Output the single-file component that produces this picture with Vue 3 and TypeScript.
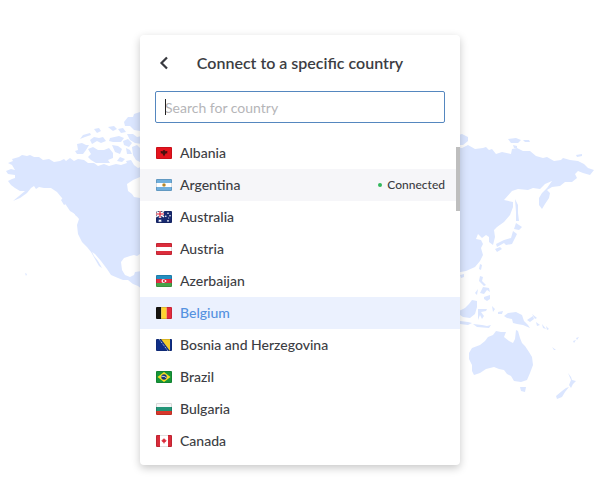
<script setup lang="ts">
import { computed, ref } from 'vue'

interface Country {
  code: string
  name: string
  connected?: boolean
}

const countries: Country[] = [
  { code: 'al', name: 'Albania' },
  { code: 'ar', name: 'Argentina', connected: true },
  { code: 'au', name: 'Australia' },
  { code: 'at', name: 'Austria' },
  { code: 'az', name: 'Azerbaijan' },
  { code: 'be', name: 'Belgium' },
  { code: 'ba', name: 'Bosnia and Herzegovina' },
  { code: 'br', name: 'Brazil' },
  { code: 'bg', name: 'Bulgaria' },
  { code: 'ca', name: 'Canada' },
]

const query = ref('')
const selected = ref('be')

const visible = computed(() =>
  countries.filter((c) => c.name.toLowerCase().includes(query.value.trim().toLowerCase())),
)
</script>

<template>
  <main class="page">
    <svg class="map" viewBox="0 0 600 500" preserveAspectRatio="xMidYMin slice" aria-hidden="true">
      <!-- Alaska, Canada and the United States -->
      <path d="M8 163L13 161L12 159L19 157L22 155L27 156L30 155L34 157L39 157L43 160L49 159L54 162L60 161L64 159L66 161L70 158L74 161L78 159L84 160L88 163L94 163L98 166L104 164L109 166L116 164L121 165L127 163L126 161L131 160L134 165L138 168L146 165V178L140 177L133 180L127 184L128 191L132 194L134 197L140 198L146 202V255L140 254L137 256L134 255L130 256L124 258L121 262L122 270L125 275L130 277L134 275L135 272L142 271V289L138 286L133 284L128 280L123 280L118 278L111 275L107 269L101 261L95 254L92 252L94 256L98 261L102 268L99 266L95 259L91 252L87 247L82 242L78 234L77 225L79 219L75 214L70 211L66 205L62 198L57 192L51 188L44 188L39 187L36 189L34 186L31 188L27 193L20 198L13 201L19 196L25 191L20 191L15 188L11 185L8 181L12 179L15 178L15 175L8 174L6 171L11 169L15 170L12 165Z" />
      <path d="M63 198L66 204L64 205L61 200ZM72 210L78 214L80 217L76 216ZM25 273L27 274L26 276Z" />
      <!-- Arctic islands -->
      <path d="M77 144L82 143L86 145L89 145L86 150L83 154L77 154L75 151L78 150ZM88 149L93 147L98 150L104 150L109 148L113 153L113 158L108 160L110 163L103 163L96 163L91 160L88 157L91 154ZM80 139L83 135L90 133L91 135L85 137ZM90 140L94 137L99 138L103 137L106 141L101 143L97 141L92 144ZM108 127L114 126L117 129L113 131ZM94 129L99 128L101 131L97 133ZM110 138L119 136L124 138L121 142L113 142L109 141ZM112 145L118 146L122 149L120 154L115 152ZM123 141L128 139L132 143L129 147L124 145ZM118 129L123 128L126 132L121 133ZM120 157L125 159L122 162L117 161ZM124 122L128 117L133 117L134 114L140 112V131L134 130L130 126L125 126ZM127 134L133 134L137 137L142 136V144L135 143L130 140ZM132 147L137 145L141 149L142 163L136 160L133 155ZM126 148L130 150L132 154L127 154Z" />
      <!-- Eurasia -->
      <path d="M455 147L462 148L468 145L475 149L483 148L486 147L489 150L492 149L496 154L502 152L511 154L512 149L517 148L523 151L530 151L536 156L543 158L547 157L554 161L561 160L563 158L570 160L578 161L584 164L588 168L594 170L590 175L583 173L578 171L575 174L577 178L572 182L565 182L560 186L552 187L547 190L550 193L549 198L545 204L542 209L539 205L539 198L542 193L547 188L552 181L545 184L540 189L533 188L528 190L518 189L512 191L504 200L513 202L513 207L510 215L504 222L497 227L494 230L495 237L493 245L489 242L489 237L486 235L482 238L478 234L476 239L481 240L483 244L481 248L483 255L480 261L475 267L466 271L455 273Z" />
      <path d="M455 136L462 134L468 137L468 141L463 145L455 145ZM508 139L516 138L521 140L518 143L511 143ZM523 140L529 140L530 142L525 142ZM513 145L517 146L517 148L514 148ZM576 155L582 154L582 156L577 157Z" />
      <!-- Japan and the Philippines -->
      <path d="M515 199L518 205L518 213L519 221L516 221L516 212ZM516 223L522 227L519 230L514 229ZM513 231L517 234L514 240L512 244L506 245L504 243L497 247L496 244L504 240L511 238ZM495 249L500 247L502 249L497 252ZM480 264L482 265L481 270L479 269ZM480 276L483 277L482 281L486 285L484 286L479 281ZM483 287L489 288L490 292L487 290L484 294L480 293ZM484 297L490 295L490 299L487 301L484 299ZM475 293L478 289L477 295ZM460 275L464 274L464 277L461 278Z" />
      <!-- Indonesia and New Guinea -->
      <path d="M459 311L465 308L469 304L472 300L477 301L477 307L475 314L470 318L463 317L460 315ZM460 321L468 322L472 323L468 325L460 324ZM473 324L482 325L487 326L491 325L489 328L477 327ZM478 309L487 309L486 311L481 312L484 316L482 319L480 315L478 320L478 314ZM492 306L495 309L493 312ZM498 312L503 311L502 314L498 314ZM504 316L508 313L516 312L522 315L524 321L528 325L530 328L523 325L517 324L513 323L512 319L507 318ZM527 320L533 316L534 319L530 322ZM532 314L537 318L535 319ZM536 322L540 325L537 326ZM542 324L546 329L543 328ZM546 326L549 329L547 330Z" />
      <!-- Australia and New Zealand -->
      <path d="M469 353L472 348L480 345L485 341L488 337L493 335L496 331L501 332L506 332L504 337L509 341L513 343L515 339L516 330L518 331L520 338L522 343L525 346L529 352L532 357L533 365L530 373L527 380L521 382L514 381L511 376L507 374L504 370L499 369L494 367L486 369L480 373L474 375L472 371L472 365L469 359ZM520 387L526 387L525 392L521 391ZM568 373L571 377L572 380L576 381L573 384L571 388L569 385L571 380ZM569 387L565 392L562 397L557 399L556 396L562 391L566 388ZM552 347L556 350L554 350ZM573 341L576 340L574 343ZM576 338L579 337L577 340Z" />
    </svg>

    <section class="card" aria-labelledby="panel-title">
      <header class="header">
        <button class="back" type="button" aria-label="Back">
          <svg viewBox="0 0 12 14" width="12" height="14" aria-hidden="true">
            <path d="M9 1.500L3.500 7l5.500 5.500" />
          </svg>
        </button>
        <h1 id="panel-title">Connect to a specific country</h1>
      </header>

      <div class="search">
        <input v-model="query" type="text" aria-label="Search for country" placeholder="Search for country" />
        <span v-if="!query" class="caret"></span>
      </div>

      <div class="results">
        <ul class="list">
          <li v-for="country in visible" :key="country.code">
            <button
              type="button"
              class="row"
              :class="{ connected: country.connected, selected: country.code === selected }"
              @click="selected = country.code"
            >
              <svg class="flag" viewBox="0 0 16 12" aria-hidden="true">
                <g v-if="country.code === 'al'">
                  <path fill="#e5131d" d="M0 0h16v12H0z" />
                  <path fill="#4a100f" d="M7.300 3l.7.600.7-.6.600.5-.4.800 2.600-.3-.4 1.300.4.900-1.900.2L8.800 8 8 9.500 7.200 8l-.8-1.600-1.900-.2.400-.9-.4-1.300 2.600.3-.4-.8z" />
                </g>
                <g v-else-if="country.code === 'ar'">
                  <path fill="#70afdd" d="M0 0h16v12H0z" />
                  <path fill="#fff" d="M0 4h16v4H0z" />
                  <circle cx="8" cy="6" r="1.800" fill="#c99836" />
                  <circle cx="8" cy="6" r=".7" fill="#8b6527" />
                </g>
                <g v-else-if="country.code === 'au'">
                  <path fill="#182a70" d="M0 0h16v12H0z" />
                  <path stroke="#fff" stroke-width="1.500" d="M0 0l8 6M8 0L0 6" />
                  <path stroke="#fff" stroke-width="2.400" d="M4 0v7M0 3h8" />
                  <path stroke="#d91f35" stroke-width="1.200" d="M4 0v6.500M0 3h8" />
                  <g fill="#fff">
                    <path d="M4 8l.5 1 1.200-.2-.6 1 .6.900-1.200-.1L4 11.500l-.5-.9-1.200.1.600-.9-.6-1 1.200.2z" />
                    <circle cx="12" cy="2.200" r=".8" />
                    <circle cx="9.800" cy="5.300" r=".8" />
                    <circle cx="14" cy="4.700" r=".8" />
                    <circle cx="12.700" cy="7" r=".5" />
                    <circle cx="12" cy="9.800" r=".9" />
                  </g>
                </g>
                <g v-else-if="country.code === 'at'">
                  <path fill="#dc2d3c" d="M0 0h16v12H0z" />
                  <path fill="#fff" d="M0 4h16v4H0z" />
                </g>
                <g v-else-if="country.code === 'az'">
                  <path fill="#238fc1" d="M0 0h16v4H0z" />
                  <path fill="#df2d43" d="M0 4h16v4H0z" />
                  <path fill="#45a348" d="M0 8h16v4H0z" />
                  <circle cx="7.500" cy="6" r="2" fill="#fff" />
                  <circle cx="8.200" cy="6" r="1.400" fill="#df2d43" />
                  <circle cx="9.500" cy="6" r=".9" fill="#fff" />
                </g>
                <g v-else-if="country.code === 'be'">
                  <path fill="#15130f" d="M0 0h5.300v12H0z" />
                  <path fill="#ffd431" d="M5.300 0h5.400v12H5.300z" />
                  <path fill="#e42b3d" d="M10.700 0H16v12h-5.300z" />
                </g>
                <g v-else-if="country.code === 'ba'">
                  <path fill="#102f87" d="M0 0h16v12H0z" />
                  <path fill="#f6cf2c" d="M5 0h9v12z" />
                  <path stroke="#d6e0f5" stroke-dasharray="1 1" d="M3 0l9 12" />
                </g>
                <g v-else-if="country.code === 'br'">
                  <path fill="#169639" d="M0 0h16v12H0z" />
                  <path fill="#f8dc24" d="M8 1l6.500 5L8 11 1.500 6z" />
                  <circle cx="8" cy="6" r="2.700" fill="#173477" />
                  <path fill="none" stroke="#fff" stroke-width=".8" d="M5.500 5.300q3-.5 5 1.600" />
                </g>
                <g v-else-if="country.code === 'bg'">
                  <path fill="#f7f7f7" d="M0 0h16v4H0z" />
                  <path fill="#229477" d="M0 4h16v4H0z" />
                  <path fill="#d8382c" d="M0 8h16v4H0z" />
                </g>
                <g v-else>
                  <path fill="#d92b3a" d="M0 0h16v12H0z" />
                  <path fill="#fff" d="M4 0h8v12H4z" />
                  <path fill="#d92b3a" d="M8 3l.7 1.300.7-.2-.1 1.200 1.200-.2-.3 1.100-1.700 1.500H8.200V9h-.4V7.700h-.3L5.800 6.200l-.3-1.100 1.200.2-.1-1.200.7.200z" />
                </g>
                <path class="edge" d="M.5.5h15v11H.5z" />
              </svg>
              <span class="name">{{ country.name }}</span>
              <span v-if="country.connected" class="status">Connected</span>
            </button>
          </li>
        </ul>
        <span class="thumb"></span>
      </div>
    </section>
  </main>
</template>

<style>
body {
  margin: 0;
  background: #fff;
}
</style>

<style scoped>
.page {
  position: relative;
  display: flex;
  justify-content: center;
  align-items: flex-start;
  box-sizing: border-box;
  min-height: 100vh;
  padding: 35px 16px;
  overflow: hidden;
  background: #fff;
  color: #3c3d43;
  font-family: Lato, "Liberation Sans", sans-serif;
}

.map {
  position: absolute;
  inset: 0;
  width: 100%;
  height: 100%;
  fill: #dbe6ff;
}

.card {
  position: relative;
  box-sizing: border-box;
  width: 100%;
  max-width: 320px;
  padding-bottom: 8px;
  border-radius: 4px;
  background: #fff;
  box-shadow: 0 3px 8px rgba(0, 0, 0, 0.22);
}

.header {
  display: grid;
  grid-template-columns: 16px 1fr 16px;
  align-items: center;
  height: 56px;
  padding: 0 16px;
}

.back {
  display: flex;
  justify-content: center;
  padding: 0;
  border: 0;
  background: none;
  cursor: pointer;
}

.back path {
  fill: none;
  stroke: #38393f;
  stroke-width: 2.2;
}

h1 {
  margin: 0;
  font-size: 16px;
  font-weight: 600;
  line-height: 24px;
  text-align: center;
}

.search {
  position: relative;
  margin: 0 15px;
}

input {
  display: block;
  box-sizing: border-box;
  width: 100%;
  height: 32px;
  padding: 0 9px;
  border: 1px solid #5587bf;
  border-radius: 2px;
  outline: none;
  background: #fff;
  color: #3c3d43;
  font: 400 14px/20px Lato, "Liberation Sans", sans-serif;
}

input::placeholder {
  color: #b5b5b8;
  opacity: 1;
}

.caret {
  position: absolute;
  top: 8px;
  left: 10px;
  width: 1px;
  height: 16px;
  background: #222;
}

.results {
  position: relative;
  padding-top: 14px;
}

.list {
  margin: 0;
  padding: 0;
  list-style: none;
}

.row {
  display: flex;
  align-items: center;
  gap: 8px;
  width: 100%;
  height: 32px;
  padding: 0 15px 0 16px;
  border: 0;
  background: transparent;
  color: inherit;
  font: 500 14px/20px Lato, "Liberation Sans", sans-serif;
  text-align: left;
  cursor: pointer;
}

.row.connected {
  background: #f6f6f9;
}

.row.selected {
  background: #ebf1fe;
  color: #5592e0;
}

.flag {
  flex: none;
  width: 16px;
  height: 12px;
  border-radius: 1px;
}

.edge {
  fill: none;
  stroke: #000;
  stroke-opacity: 0.12;
}

.name {
  flex: 1;
}

.status {
  display: flex;
  align-items: center;
  gap: 5px;
  font-size: 12px;
}

.status::before {
  content: "";
  width: 4px;
  height: 4px;
  border-radius: 50%;
  background: #32b85d;
}

.thumb {
  position: absolute;
  top: 24px;
  right: 0;
  width: 4px;
  height: 64px;
  background: #bebebe;
}
</style>
